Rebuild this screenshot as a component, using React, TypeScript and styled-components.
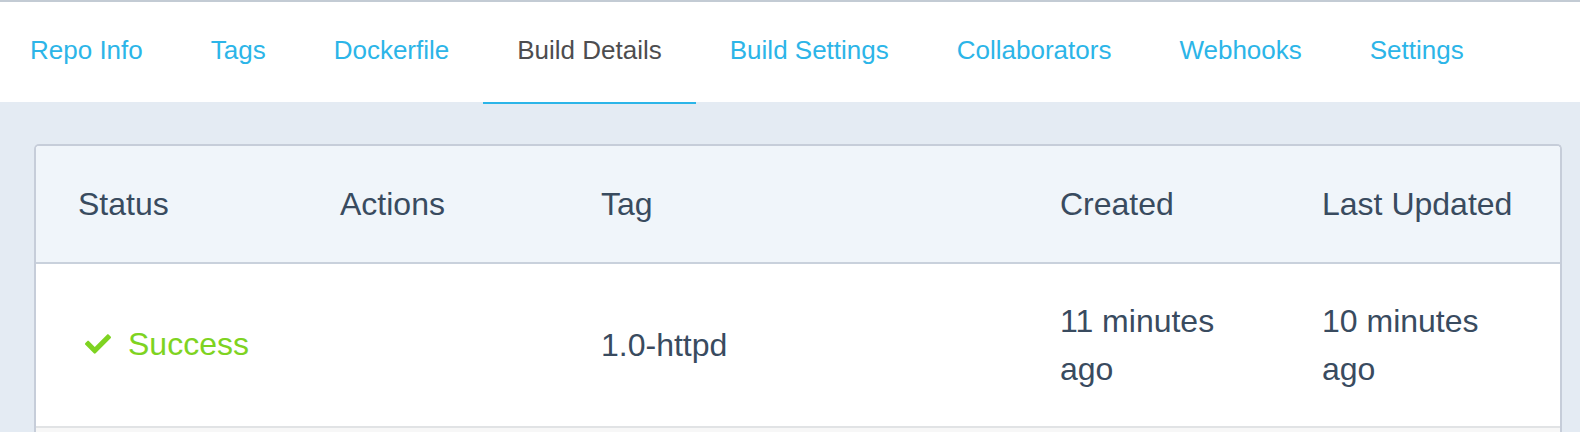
import React from "react";
import styled, { createGlobalStyle } from "styled-components";
import { FaCheck } from "react-icons/fa";

const GlobalStyle = createGlobalStyle`
  html, body {
    margin: 0;
    padding: 0;
    background: #e4ebf3;
    font-family: "Liberation Sans", Arial, Helvetica, sans-serif;
    overflow: hidden;
  }
  * { box-sizing: border-box; }
`;

const Page = styled.div`
  width: 1580px;
  height: 432px;
  border-top: 2px solid #c3cbd4;
`;

const TabBar = styled.nav`
  height: 100px;
  background: #ffffff;
  display: flex;
  align-items: stretch;
`;

const TabList = styled.ul`
  list-style: none;
  margin: 0 0 0 -4px;
  padding: 0;
  display: flex;
  align-items: flex-start;
`;

const Tab = styled.li<{ $active?: boolean }>`
  height: 102px;
  padding: 0 34px;
  display: flex;
  align-items: center;
  padding-bottom: 3px;
  font-size: 26px;
  color: ${(p) => (p.$active ? "#4d4d4f" : "#2cb5e8")};
  border-bottom: 2px solid ${(p) => (p.$active ? "#2cb5e8" : "transparent")};
  white-space: nowrap;
  cursor: pointer;
`;

const Content = styled.main`
  padding: 42px 18px 0 34px;
`;

const Card = styled.section`
  border: 2px solid #c6cdd9;
  border-bottom: none;
  border-radius: 5px 5px 0 0;
  background: #ffffff;
  overflow: hidden;
`;

const Row = styled.div<{ $head?: boolean }>`
  display: grid;
  grid-template-columns: 262px 261px 459px 262px 1fr;
  align-items: center;
  background: ${(p) => (p.$head ? "#f0f5fa" : "#ffffff")};
  border-bottom: ${(p) => (p.$head ? "2px solid #c9d1dc" : "2px solid #e1e3e5")};
`;

const Cell = styled.div<{ $head?: boolean }>`
  padding: ${(p) => (p.$head ? "34px 42px 34px 42px" : "33px 42px 33px 42px")};
  font-size: 32px;
  line-height: 48px;
  color: #394b5f;
  white-space: ${(p) => (p.$head ? "nowrap" : "normal")};
`;

const StatusText = styled.span`
  display: inline-flex;
  align-items: center;
  color: #7ed321;
  padding-left: 7px;
  gap: 17px;
  svg {
    width: 26px;
    height: 26px;
  }
`;

const NextRow = styled.div`
  height: 10px;
  background: #f7f7f7;
`;

const tabs = [
  "Repo Info",
  "Tags",
  "Dockerfile",
  "Build Details",
  "Build Settings",
  "Collaborators",
  "Webhooks",
  "Settings",
];

export default function App() {
  return (
    <>
      <GlobalStyle />
      <Page>
        <TabBar>
          <TabList>
            {tabs.map((t) => (
              <Tab key={t} $active={t === "Build Details"}>
                {t}
              </Tab>
            ))}
          </TabList>
        </TabBar>
        <Content>
          <Card>
            <Row $head>
              <Cell $head>Status</Cell>
              <Cell $head>Actions</Cell>
              <Cell $head>Tag</Cell>
              <Cell $head>Created</Cell>
              <Cell $head>Last Updated</Cell>
            </Row>
            <Row>
              <Cell>
                <StatusText>
                  <FaCheck />
                  Success
                </StatusText>
              </Cell>
              <Cell />
              <Cell>1.0-httpd</Cell>
              <Cell>11 minutes ago</Cell>
              <Cell>10 minutes ago</Cell>
            </Row>
            <NextRow />
          </Card>
        </Content>
      </Page>
    </>
  );
}
